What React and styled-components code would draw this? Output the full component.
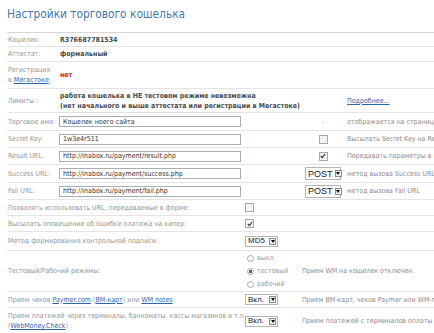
import styled, { createGlobalStyle } from 'styled-components';

const GlobalStyle = createGlobalStyle`
  body {
    margin: 0;
    background: #fff;
    overflow: hidden;
    font-family: "DejaVu Sans Condensed", "DejaVu Sans", sans-serif;
  }
`;

const Page = styled.div`
  width: 640px;
  padding: 7px 0 0 7px;
`;

const Title = styled.h1`
  margin: 0;
  height: 25px;
  font-size: 11.8px;
  line-height: 14px;
  font-weight: normal;
  color: #4479ad;
`;

const Table = styled.div`
  border-top: 1px solid #d6d6d6;
`;

const Row = styled.div`
  display: grid;
  grid-template-columns: ${(p) => p.$cols};
  align-items: center;
  min-height: ${(p) => p.$h}px;
  border-bottom: 1px solid #e4e4e4;
  font-size: 7px;
  line-height: 10px;
`;

const COLS_A = '52px 241px 46px 1fr';
const COLS_B = '238px 55px 1fr';

const Label = styled.div`
  color: #959595;
  padding-left: 1px;
  white-space: nowrap;
`;

const Value = styled.div`
  color: #4a4a4a;
  font-weight: bold;
  padding-left: 1px;
  grid-column: ${(p) => p.$span || 'auto'};
  white-space: nowrap;
`;

const Danger = styled.span`
  color: #c8151b;
  font-weight: bold;
`;

const Link = styled.a`
  color: #2f64a8;
  text-decoration: underline;
`;

const Desc = styled.div`
  color: #8c8c8c;
  white-space: nowrap;
  padding-left: ${(p) => p.$pad || 1}px;
`;

const Control = styled.div`
  display: flex;
  justify-content: ${(p) => p.$justify || 'center'};
  align-items: center;
  color: #aaa;
`;

const TextInput = styled.input`
  box-sizing: border-box;
  width: 182px;
  height: 11px;
  margin: 0;
  padding: 0 3px;
  border: 1px solid #a9aeb4;
  font-family: inherit;
  font-size: 7px;
  color: #333;
  outline: none;
`;

const Select = styled.div`
  display: inline-flex;
  align-items: center;
  gap: 2px;
  box-sizing: border-box;
  width: ${(p) => p.$w}px;
  height: ${(p) => (p.$tall ? 13 : 11)}px;
  padding: 0 1px 0 2px;
  border: 1px solid #b4b4b4;
  background: #fff;
  font-family: "Liberation Sans", Arial, sans-serif;
  font-size: ${(p) => (p.$tall ? 9 : 8)}px;
  color: #222;
`;

const SelectText = styled.span`
  flex: 1;
  white-space: nowrap;
`;

const Arrow = styled.span`
  display: flex;
  flex: none;
  align-items: center;
  justify-content: center;
  box-sizing: border-box;
  width: 7px;
  height: 7px;
  border: 1px solid #8c8c8c;
  background: #eee;
`;

const Box = styled.span`
  display: flex;
  align-items: center;
  justify-content: center;
  width: 7px;
  height: 7px;
  border: 1px solid #a8a8a8;
  background: #f3f3f3;
`;

const Radios = styled.div`
  display: flex;
  flex-direction: column;
  gap: 3px;
  padding-left: 2px;
`;

const RadioItem = styled.div`
  display: flex;
  align-items: center;
  gap: 3px;
  color: #999;
`;

const Dot = styled.span`
  box-sizing: border-box;
  width: 7px;
  height: 7px;
  border-radius: 50%;
  border: 1px solid #a8a8a8;
  background: ${(p) => (p.$on ? 'radial-gradient(circle, #3e5f86 0 1.6px, #fff 2px)' : '#fff')};
`;

function Dropdown({ text, w, tall }) {
  return (
    <Select $w={w} $tall={tall}>
      <SelectText>{text}</SelectText>
      <Arrow>
        <svg width="4" height="3" viewBox="0 0 4 3">
          <path d="M0 0h4L2 3z" fill="#111" />
        </svg>
      </Arrow>
    </Select>
  );
}

function Check({ on }) {
  return (
    <Box>
      {on && (
        <svg width="6" height="6" viewBox="0 0 6 6">
          <path d="M0.8 3l1.5 1.6L5.2 1" stroke="#333" strokeWidth="1.1" fill="none" />
        </svg>
      )}
    </Box>
  );
}

function Radio({ on, children }) {
  return (
    <RadioItem>
      <Dot $on={on} />
      {children}
    </RadioItem>
  );
}

export default function App() {
  return (
    <Page>
      <GlobalStyle />
      <Title>Настройки торгового кошелька</Title>
      <Table>
        <Row $cols={COLS_A} $h={13}>
          <Label>Кошелек:</Label>
          <Value>R376687781534</Value>
        </Row>
        <Row $cols={COLS_A} $h={14}>
          <Label>Аттестат:</Label>
          <Value>формальный</Value>
        </Row>
        <Row $cols={COLS_A} $h={26}>
          <Label>
            Регистрация
            <br />в <Link>Мегастоке</Link>:
          </Label>
          <Value><Danger>нет</Danger></Value>
        </Row>
        <Row $cols={COLS_A} $h={23}>
          <Label>Лимиты :</Label>
          <Value $span="span 2">
            работа кошелька в НЕ тестовом режиме невозможна
            <br />
            (нет начального и выше аттестата или регистрации в Мегастоке)
          </Value>
          <Desc><Link>Подробнее...</Link></Desc>
        </Row>
        <Row $cols={COLS_A} $h={17}>
          <Label>Торговое имя:</Label>
          <TextInput defaultValue="Кошелек ноего сайта" />
          <Control>-</Control>
          <Desc>отображается на странице оплаты</Desc>
        </Row>
        <Row $cols={COLS_A} $h={16}>
          <Label>Secret Key:</Label>
          <TextInput defaultValue="1w3e4r511" />
          <Control><Check /></Control>
          <Desc>Высылать Secret Key на Result URL</Desc>
        </Row>
        <Row $cols={COLS_A} $h={16}>
          <Label>Result URL:</Label>
          <TextInput defaultValue="http://inabox.ru/payment/result.php" />
          <Control><Check on /></Control>
          <Desc>Передавать параметры в предварительном запросе</Desc>
        </Row>
        <Row $cols={COLS_A} $h={17}>
          <Label>Success URL:</Label>
          <TextInput defaultValue="http://inabox.ru/payment/success.php" />
          <Control><Dropdown text="POST" w={36} tall /></Control>
          <Desc>метод вызова Success URL</Desc>
        </Row>
        <Row $cols={COLS_A} $h={16}>
          <Label>Fail URL:</Label>
          <TextInput defaultValue="http://inabox.ru/payment/fail.php" />
          <Control><Dropdown text="POST" w={36} tall /></Control>
          <Desc>метод вызова Fail URL</Desc>
        </Row>
        <Row $cols={COLS_B} $h={15}>
          <Label>Позволять использовать URL, передаваемые в форме:</Label>
          <Control $justify="flex-start"><Check /></Control>
        </Row>
        <Row $cols={COLS_B} $h={15}>
          <Label>Высылать оповещение об ошибке платежа на кипер:</Label>
          <Control $justify="flex-start"><Check on /></Control>
        </Row>
        <Row $cols={COLS_B} $h={18}>
          <Label>Метод формирования контрольной подписи:</Label>
          <Control $justify="flex-start"><Dropdown text="MD5" w={33} /></Control>
        </Row>
        <Row $cols={COLS_B} $h={40}>
          <Label>Тестовый/Рабочий режимы:</Label>
          <Radios>
            <Radio>выкл.</Radio>
            <Radio on>тестовый</Radio>
            <Radio>рабочий</Radio>
          </Radios>
          <Desc $pad={2}>Прием WM на кошелек отключен.</Desc>
        </Row>
        <Row $cols={COLS_B} $h={15}>
          <Label>
            Прием чеков <Link>Paymer.com</Link> (<Link>ВМ-карт</Link>) или <Link>WM notes</Link>:
          </Label>
          <Control $justify="flex-start"><Dropdown text="Вкл." w={33} /></Control>
          <Desc $pad={2}>Прием ВМ-карт, чеков Paymer или WM-notes включен.</Desc>
        </Row>
        <Row $cols={COLS_B} $h={26}>
          <Label>
            Прием платежей через терминалы, банкоматы, кассы магазинов и т.п.
            <br />(<Link>WebMoney.Check</Link>) :
          </Label>
          <Control $justify="flex-start"><Dropdown text="Вкл." w={33} /></Control>
          <Desc $pad={2}>Прием платежей с терминалов оплаты на кошелек включен.</Desc>
        </Row>
      </Table>
    </Page>
  );
}
